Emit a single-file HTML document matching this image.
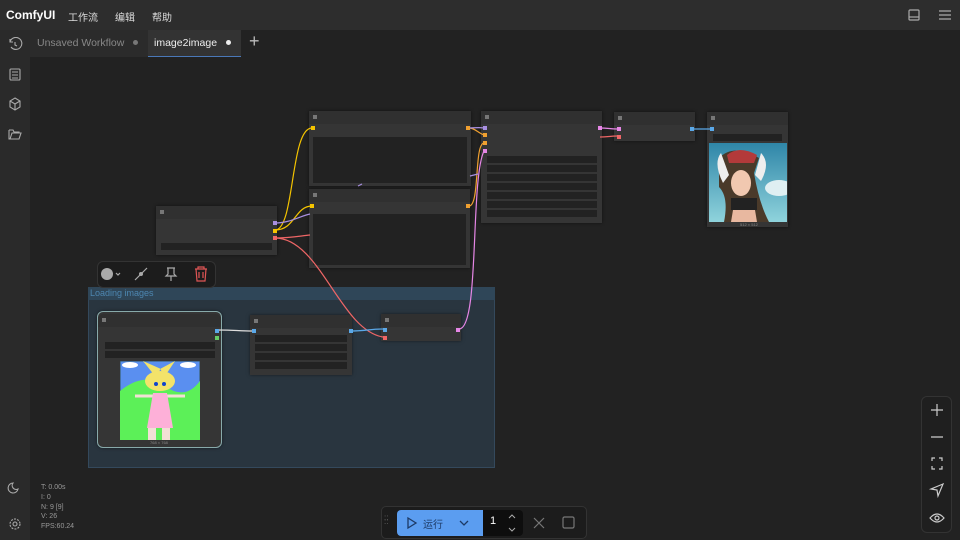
<!DOCTYPE html>
<html><head><meta charset="utf-8"><style>
*{margin:0;padding:0;box-sizing:border-box}
body{width:960px;height:540px;overflow:hidden;background:#222;font-family:"Liberation Sans","Noto Sans CJK SC",sans-serif;position:relative;color:#ddd}
.a{position:absolute}
.n{position:absolute;background:#353535;box-shadow:0 0 3px rgba(0,0,0,.5)}
.n .t{height:13px;background:#303030;position:relative}
.n .t:before{content:"";position:absolute;left:4px;top:4px;width:4px;height:4px;background:#777}
.w{position:absolute;background:#222}
.d{position:absolute;width:4px;height:4px}
</style></head><body>
<div class="a" style="left:0;top:0;width:960px;height:30px;background:#2d2d2d"></div>
<div class="a" style="left:6px;top:8px;font-size:12px;font-weight:bold;color:#fff">ComfyUI</div>
<div class="a" style="left:68px;top:9px;font-size:10px;color:#ddd">工作流</div>
<div class="a" style="left:115px;top:9px;font-size:10px;color:#ddd">编辑</div>
<div class="a" style="left:152px;top:9px;font-size:10px;color:#ddd">帮助</div>
<svg class="a" style="left:905px;top:8px" width="50" height="14" fill="none" stroke="#aaa" stroke-width="1.2"><rect x="4" y="2" width="10" height="10" rx="1"/><line x1="4" y1="9" x2="14" y2="9"/><path d="M34 3h12M34 7h12M34 11h12"/></svg>
<div class="a" style="left:0;top:30px;width:30px;height:510px;background:#2a2a2a"></div>
<svg class="a" style="left:7px;top:37px" width="16" height="500" fill="none" stroke="#aaa" stroke-width="1.1">
<path d="M3 5a6 6 0 1 1 1 5M3 2v3h3M8 5v3l2 1"/>
<rect x="3" y="32" width="10" height="11" rx="1"/><path d="M5 35h6M5 38h6M5 41h6"/>
<path d="M8 61l5 3v6l-5 3-5-3v-6z M3 64l5 3 5-3 M8 67v6"/>
<path d="M2 93v9h10l2-6H5l-2 6 M2 93h4l1 2h5v1"/>
<path d="M11 452a5 5 0 1 1-5-6 4 4 0 0 0 5 6z"/>
<circle cx="8" cy="487" r="2"/><circle cx="8" cy="487" r="5" stroke-dasharray="2 1.2"/>
</svg>
<div class="a" style="left:30px;top:30px;width:118px;height:27px;background:#2b2b2b"></div>
<div class="a" style="left:37px;top:37px;font-size:10.5px;color:#888">Unsaved Workflow</div>
<div class="a" style="left:133px;top:40px;width:5px;height:5px;border-radius:50%;background:#777"></div>
<div class="a" style="left:148px;top:30px;width:93px;height:27px;background:#333;border-bottom:1px solid #4a78b8"></div>
<div class="a" style="left:154px;top:37px;font-size:10.5px;color:#eee">image2image</div>
<div class="a" style="left:226px;top:40px;width:5px;height:5px;border-radius:50%;background:#eee"></div>
<div class="a" style="left:249px;top:31px;font-size:18px;color:#bbb;font-weight:300">+</div>

<!-- group -->
<div class="a" style="left:88px;top:287px;width:407px;height:181px;background:#29353f;border:1px solid #34495c"></div>
<div class="a" style="left:88px;top:287px;width:407px;height:13px;background:#2f4658"></div>
<div class="a" style="left:90px;top:288px;font-size:9px;color:#4d86b0">Loading images</div>

<!-- nodes -->
<div class="n" style="left:309px;top:111px;width:162px;height:75px"><div class="t"></div><div class="w" style="left:4px;top:26px;width:154px;height:46px"></div></div>
<div class="n" style="left:309px;top:189px;width:161px;height:79px"><div class="t"></div><div class="w" style="left:4px;top:25px;width:153px;height:51px"></div></div>
<div class="n" style="left:156px;top:206px;width:121px;height:49px"><div class="t"></div><div class="w" style="left:5px;top:37px;width:111px;height:7px"></div></div>
<div class="n" style="left:481px;top:111px;width:121px;height:112px"><div class="t"></div>
<div class="w" style="left:6px;top:45px;width:110px;height:7px"></div><div class="w" style="left:6px;top:54px;width:110px;height:7px"></div><div class="w" style="left:6px;top:63px;width:110px;height:7px"></div><div class="w" style="left:6px;top:72px;width:110px;height:7px"></div><div class="w" style="left:6px;top:81px;width:110px;height:7px"></div><div class="w" style="left:6px;top:90px;width:110px;height:7px"></div><div class="w" style="left:6px;top:99px;width:110px;height:7px"></div></div>
<div class="n" style="left:614px;top:112px;width:81px;height:29px"><div class="t"></div></div>
<div class="n" style="left:707px;top:112px;width:81px;height:115px"><div class="t"></div><div class="w" style="left:6px;top:22px;width:69px;height:7px"></div></div>
<svg class="a" style="left:709px;top:143px" width="78" height="79"><defs><linearGradient id="s" x1="0" y1="0" x2="0" y2="1"><stop offset="0" stop-color="#2f86a8"/><stop offset="1" stop-color="#8fd3dc"/></linearGradient></defs><rect width="78" height="79" fill="url(#s)"/><ellipse cx="70" cy="45" rx="14" ry="8" fill="#dfeff2"/><path d="M10 15q15-15 40 0l-5 15q5 30 15 49H15q5-25-5-35z" fill="#4a3a2a"/><path d="M18 12q12-10 30 0l-3 8H20z" fill="#b33a3a"/><path d="M12 10q-8 10 2 30l6-8zM52 10q10 10 0 28l-6-6z" fill="#eee"/><ellipse cx="32" cy="40" rx="10" ry="13" fill="#f1c8b0"/><rect x="22" y="55" width="26" height="12" fill="#222"/><path d="M24 67h22l2 12H22z" fill="#e8b8a0"/></svg>
<div class="a" style="left:740px;top:222px;font-size:4px;color:#888">512 × 512</div>

<div class="n" style="left:97px;top:311px;width:125px;height:137px;border:1px solid #8aa;border-radius:6px;background:#353535"><div class="t" style="border-radius:6px 6px 0 0;margin-top:2px"></div><div class="w" style="left:7px;top:30px;width:110px;height:7px"></div><div class="w" style="left:7px;top:39px;width:110px;height:7px"></div></div>
<svg class="a" style="left:120px;top:361px" width="80" height="79"><rect width="80" height="79" fill="#5a8ff0" stroke="#355" /><path d="M0 30q25-20 45-5t35-5v59H0z" fill="#5cf058"/><path d="M35 15l-12-15 18 8zM45 15l10-15-15 8z" fill="#f3e36a"/><ellipse cx="40" cy="20" rx="15" ry="10" fill="#f3e36a"/><circle cx="36" cy="23" r="2" fill="#14c"/><circle cx="44" cy="23" r="2" fill="#14c"/><path d="M15 35h50" stroke="#f2e0d5" stroke-width="3"/><path d="M33 32h14l6 35H27z" fill="#fdb0d8"/><rect x="28" y="67" width="8" height="12" fill="#f2e0d5"/><rect x="42" y="67" width="8" height="12" fill="#f2e0d5"/><ellipse cx="10" cy="4" rx="8" ry="3" fill="#fff"/><ellipse cx="68" cy="4" rx="8" ry="3" fill="#fff"/></svg>
<div class="a" style="left:150px;top:440px;font-size:4px;color:#888">768 × 768</div>

<div class="n" style="left:250px;top:315px;width:102px;height:60px"><div class="t"></div><div class="w" style="left:5px;top:20px;width:92px;height:7px"></div><div class="w" style="left:5px;top:29px;width:92px;height:7px"></div><div class="w" style="left:5px;top:38px;width:92px;height:7px"></div><div class="w" style="left:5px;top:47px;width:92px;height:7px"></div></div>
<div class="n" style="left:381px;top:314px;width:80px;height:27px"><div class="t"></div></div>

<!-- links -->
<svg class="a" style="left:0;top:0" width="960" height="540" fill="none" stroke-width="1.2">
<path d="M275 230C295 230 290 128 312 128" stroke="#f5c400"/>
<path d="M275 230C295 230 295 206 312 206" stroke="#f5c400"/>
<path d="M275 223C290 223 300 216 310 214" stroke="#a88fe0"/>
<path d="M275 238C290 238 300 236 310 235" stroke="#e66"/>
<path d="M275 238C320 238 340 330 383 337" stroke="#e66"/>
<path d="M469 128C475 128 478 133 484 135" stroke="#f0a030"/>
<path d="M469 128C475 128 478 127 484 128" stroke="#a88fe0"/>
<path d="M469 206C480 206 474 144 484 143" stroke="#f0a030"/>
<path d="M459 329C480 329 470 180 484 151" stroke="#e686e6"/>
<path d="M600 128C608 128 610 129 617 129" stroke="#e686e6"/>
<path d="M600 137C608 137 610 136 617 136" stroke="#e66"/>
<path d="M693 129C700 129 703 129 711 129" stroke="#5aa8e8"/>
<path d="M218 330C235 330 238 331 253 331" stroke="#ddd"/>
<path d="M351 331C365 331 370 329 384 329" stroke="#5aa8e8"/>
<path d="M358 186L362 184M470 176L478 174" stroke="#a88fe0"/>
</svg>
<!-- dots -->
<div class="d" style="left:311px;top:126px;background:#f5c400"></div>
<div class="d" style="left:466px;top:126px;background:#f0a030"></div>
<div class="d" style="left:310px;top:204px;background:#f5c400"></div>
<div class="d" style="left:466px;top:204px;background:#f0a030"></div>
<div class="d" style="left:273px;top:221px;background:#a88fe0"></div>
<div class="d" style="left:273px;top:229px;background:#f5c400"></div>
<div class="d" style="left:273px;top:236px;background:#e66"></div>
<div class="d" style="left:483px;top:126px;background:#a88fe0"></div>
<div class="d" style="left:483px;top:133px;background:#f0a030"></div>
<div class="d" style="left:483px;top:141px;background:#f0a030"></div>
<div class="d" style="left:483px;top:149px;background:#e686e6"></div>
<div class="d" style="left:598px;top:126px;background:#e686e6"></div>
<div class="d" style="left:617px;top:127px;background:#e686e6"></div>
<div class="d" style="left:617px;top:135px;background:#e66"></div>
<div class="d" style="left:690px;top:127px;background:#5aa8e8"></div>
<div class="d" style="left:710px;top:127px;background:#5aa8e8"></div>
<div class="d" style="left:215px;top:329px;background:#5aa8e8"></div>
<div class="d" style="left:215px;top:336px;background:#6c6"></div>
<div class="d" style="left:252px;top:329px;background:#5aa8e8"></div>
<div class="d" style="left:349px;top:329px;background:#5aa8e8"></div>
<div class="d" style="left:383px;top:328px;background:#5aa8e8"></div>
<div class="d" style="left:383px;top:336px;background:#e66"></div>
<div class="d" style="left:456px;top:328px;background:#e686e6"></div>

<!-- selection toolbar -->
<div class="a" style="left:97px;top:261px;width:119px;height:27px;background:#1c1c1c;border:1px solid #333;border-radius:6px"></div>
<svg class="a" style="left:97px;top:261px" width="119" height="27" fill="none" stroke-width="1.2"><circle cx="10" cy="13" r="6" fill="#aaa"/><path d="M19 12l2 2 2-2" stroke="#aaa"/><path d="M38 19l12-12M44 13l-3 3" stroke="#aaa"/><circle cx="44" cy="13" r="2" fill="#aaa"/><path d="M70 7h8M71 7v6l-2 2h10l-2-2v-6M74 15v5" stroke="#aaa"/><path d="M98 8h12M101 8v-2h6v2M99 8l1 12h8l1-12M102 11v6M106 11v6" stroke="#e05555"/></svg>

<!-- stats -->
<div class="a" style="left:41px;top:483px;font-size:7px;line-height:9.8px;color:#999">T: 0.00s<br>I: 0<br>N: 9 [9]<br>V: 26<br>FPS:60.24</div>

<!-- run bar -->
<div class="a" style="left:381px;top:506px;width:206px;height:33px;background:#1c1c1c;border:1px solid #333;border-radius:5px"></div>
<div class="a" style="left:384px;top:516px;font-size:8px;color:#666;line-height:4px">::<br>::</div>
<div class="a" style="left:397px;top:510px;width:86px;height:26px;background:#5b9df0;border-radius:4px 0 0 4px"></div>
<svg class="a" style="left:397px;top:510px" width="86" height="26" fill="none" stroke="#1d3a66" stroke-width="1.3"><path d="M11 8v10l8-5z"/><path d="M63 11l4 4 4-4"/></svg>
<div class="a" style="left:423px;top:516px;font-size:10px;color:#1d3a66">运行</div>
<div class="a" style="left:483px;top:510px;width:40px;height:26px;background:#0e0e0e;border-radius:0 4px 4px 0"></div>
<div class="a" style="left:490px;top:515px;font-size:11px;color:#fff">1</div>
<svg class="a" style="left:505px;top:512px" width="14" height="22" fill="none" stroke="#aaa"><path d="M4 6l3-3 3 3M4 16l3 3 3-3"/></svg>
<svg class="a" style="left:530px;top:514px" width="50" height="18" fill="none" stroke="#777" stroke-width="1.2"><path d="M4 4l10 10M14 4L4 14"/><rect x="33" y="3" width="11" height="11" rx="1.5"/></svg>

<!-- zoom controls -->
<div class="a" style="left:921px;top:396px;width:31px;height:137px;background:#1f1f1f;border:1px solid #333;border-radius:6px"></div>
<svg class="a" style="left:921px;top:396px" width="31" height="137" fill="none" stroke="#ccc" stroke-width="1.2"><path d="M16 8v12M10 14h12M10 41h12"/><path d="M11 65v-3h3M18 62h3v3M21 70v3h-3M14 73h-3v-3" /><path d="M22 88l-12 5 6 1 1 6z"/><path d="M9 122q7-8 14 0q-7 8-14 0z"/><circle cx="16" cy="122" r="2"/></svg>
</body></html>
